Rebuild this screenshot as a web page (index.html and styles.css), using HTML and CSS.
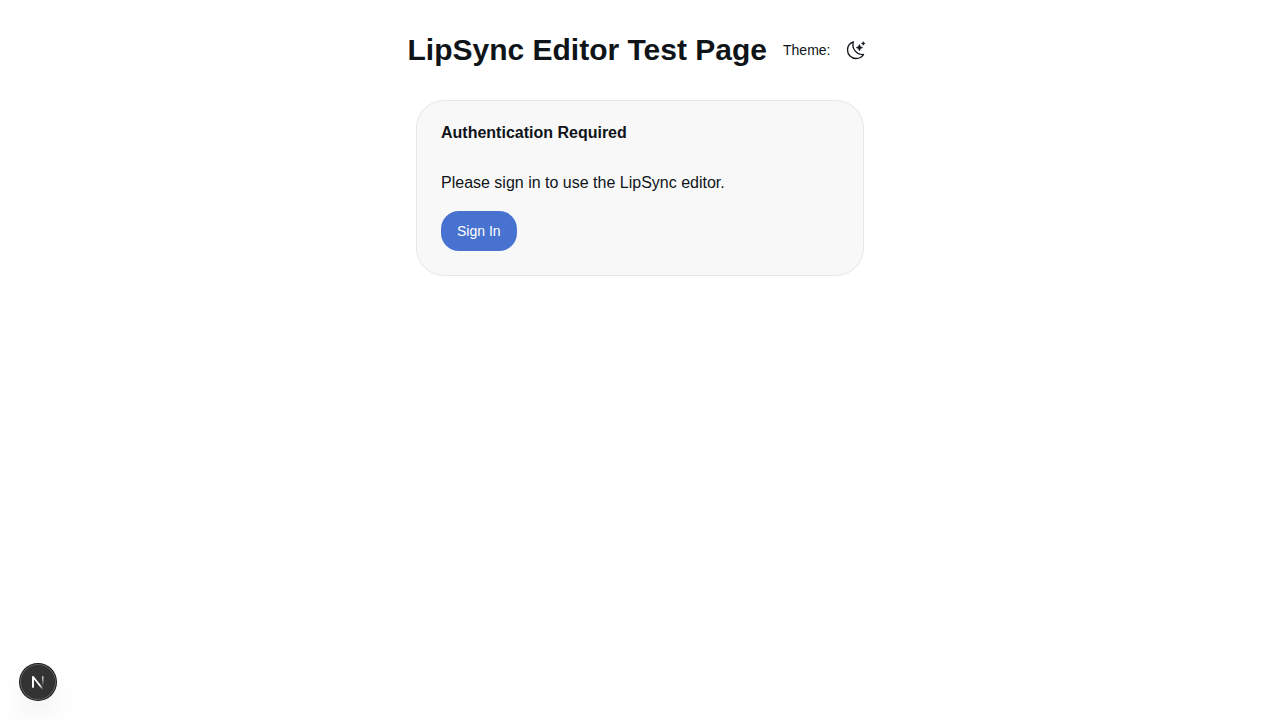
FILE: index.html
```html
<!DOCTYPE html>
<html lang="en">
<head>
<meta charset="utf-8">
<meta name="viewport" content="width=device-width, initial-scale=1">
<title>LipSync Editor Test Page</title>
<link rel="stylesheet" href="styles.css">
</head>
<body>
<main class="page">
  <header class="header">
    <h1 class="title">LipSync Editor Test Page</h1>
    <div class="theme">
      <span class="theme-label" id="theme-label">Theme:</span>
      <button class="theme-toggle" type="button" aria-labelledby="theme-label">
        <svg width="20" height="20" viewBox="0 0 20 20" fill="none" aria-hidden="true">
          <path d="M7.4 1.8C3.8 3 1.5 6.2 1.5 10A8.5 8.5 0 0 0 10 18.5C13.2 18.5 16 17 17.6 14.5C10.8 15.2 5.2 8.6 7.4 1.8Z" stroke="currentColor" stroke-width="1.3" stroke-linejoin="round"/>
          <path d="M13.4 4.4Q13.9 7.1 16.6 7.6Q13.9 8.1 13.4 10.8Q12.9 8.1 10.2 7.6Q12.9 7.1 13.4 4.4Z" fill="currentColor" stroke="currentColor" stroke-width=".6"/>
          <path d="M17.2 1.4Q17.5 3.1 19.2 3.4Q17.5 3.7 17.2 5.4Q16.9 3.7 15.2 3.4Q16.9 3.1 17.2 1.4Z" fill="currentColor" stroke="currentColor" stroke-width=".3"/>
        </svg>
      </button>
    </div>
  </header>
  <section class="card">
    <h2 class="card-title">Authentication Required</h2>
    <div class="card-body">
      <p class="card-text">Please sign in to use the LipSync editor.</p>
      <button class="sign-in" type="button">Sign In</button>
    </div>
  </section>
</main>
<button class="dev-badge" type="button" aria-label="Open developer tools">
  <svg width="36" height="36" viewBox="0 0 36 36" fill="none" aria-hidden="true">
    <defs>
      <linearGradient id="diagonal" x1="18" y1="18" x2="23.5" y2="25" gradientUnits="userSpaceOnUse">
        <stop offset=".4" stop-color="#fff"/>
        <stop offset="1" stop-color="#fff" stop-opacity="0"/>
      </linearGradient>
      <linearGradient id="stem" x1="23" y1="12" x2="23" y2="22" gradientUnits="userSpaceOnUse">
        <stop stop-color="#fff" stop-opacity=".9"/>
        <stop offset="1" stop-color="#fff" stop-opacity="0"/>
      </linearGradient>
    </defs>
    <path d="M13 23.5V12.8L23 25.4" stroke="url(#diagonal)" stroke-width="1.7" stroke-linejoin="round"/>
    <path d="M13 23.6V12.4" stroke="#fff" stroke-width="1.7"/>
    <path d="M22.8 12.2V22" stroke="url(#stem)" stroke-width="1.5"/>
  </svg>
</button>
</body>
</html>
```
FILE: styles.css
```css
* {
  box-sizing: border-box;
  margin: 0;
}

body {
  min-height: 100vh;
  background: #fff;
  color: #0f1419;
  font-family: "Liberation Sans", Arial, Helvetica, sans-serif;
  font-size: 16px;
  line-height: 24px;
}

button {
  border: 0;
  font: inherit;
  cursor: pointer;
}

.page {
  display: flex;
  flex-direction: column;
  align-items: center;
  gap: 32px;
  padding: 32px;
}

.header,
.theme {
  display: flex;
  align-items: center;
}

.header {
  gap: 16px;
}

.theme {
  gap: 8px;
}

.title {
  font-size: 30px;
  line-height: 36px;
}

.theme-label {
  font-size: 14px;
  line-height: 20px;
}

.theme-toggle {
  display: flex;
  justify-content: center;
  width: 34px;
  padding: 8px 0;
  background: transparent;
  color: inherit;
  margin-block: -8px;
}

.card {
  width: 100%;
  max-width: 448px;
  padding: 24px;
  border: 1px solid #e1e8eb;
  border-radius: 28px;
  background: #f8f8f8;
}

.card-title {
  font-size: 16px;
  line-height: 16px;
}

.card-body {
  display: flex;
  flex-direction: column;
  align-items: flex-start;
  gap: 16px;
  padding-top: 30px;
}

.sign-in {
  height: 40px;
  padding: 0 16px;
  border-radius: 18px;
  background: #4872cf;
  color: #fff;
  font-size: 14px;
  line-height: 20px;
}

.dev-badge {
  position: fixed;
  bottom: 20px;
  left: 20px;
  padding: 0;
  width: 36px;
  height: 36px;
  border-radius: 50%;
  background: #333;
  box-shadow: 0 0 0 1px #171717, inset 0 0 0 1px #5c5c5c, 0 16px 32px -8px rgba(0, 0, 0, 0.2);
}

.dev-badge svg {
  display: block;
}
```
